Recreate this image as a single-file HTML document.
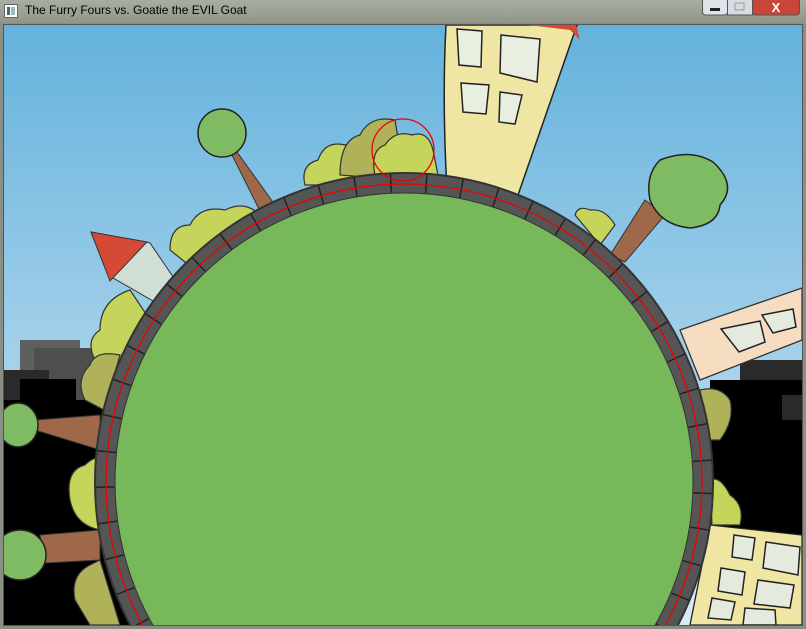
<!DOCTYPE html>
<html><head><style>
html,body{margin:0;padding:0;width:806px;height:629px;overflow:hidden;background:#8a8f86;font-family:"Liberation Sans",sans-serif}
svg{display:block}
.title{position:absolute;left:0;top:0;width:806px;height:23px;background:linear-gradient(#a9aea3,#8f9688);}
.title span{position:absolute;left:25px;top:3px;font-size:12px;color:#000}
</style></head><body>
<div class="title">
<svg style="position:absolute;left:4px;top:4px" width="14" height="14"><rect x="0.5" y="0.5" width="13" height="13" fill="#fff" stroke="#666"/><rect x="3" y="3" width="3" height="8" fill="#2a7a6a"/><rect x="7" y="3" width="4" height="8" fill="#9bb"/></svg>
<span>The Furry Fours vs. Goatie the EVIL Goat</span>
<svg style="position:absolute;left:702px;top:0" width="100" height="18">
<rect x="0.5" y="-2" width="25" height="17" rx="3" fill="#dfe4ea" stroke="#555"/><rect x="8" y="8" width="10" height="3" fill="#222"/>
<rect x="25.5" y="-2" width="25" height="17" fill="#d7dce2" stroke="#555"/><rect x="33" y="3" width="9" height="7" fill="none" stroke="#999"/>
<rect x="50.5" y="-2" width="47" height="17" rx="3" fill="#c8453a" stroke="#555"/><text x="74" y="12" font-size="13" font-weight="bold" fill="#fff" text-anchor="middle">X</text>
</svg>
</div>
<svg style="position:absolute;left:0;top:23px" width="806" height="606" viewBox="0 23 806 606">
<defs><linearGradient id="sky" x1="0" y1="0" x2="0" y2="1"><stop offset="0" stop-color="#64b2dc"/><stop offset="0.6" stop-color="#a9d3ec"/><stop offset="1" stop-color="#d9ecf6"/></linearGradient></defs>
<rect x="0" y="23" width="806" height="606" fill="#8a8f86"/>
<rect x="4" y="25" width="798" height="600" fill="url(#sky)"/>
<rect x="20" y="340" width="60" height="290" fill="#5f5f5f"/>
<rect x="34" y="348" width="110" height="280" fill="#4e4e4e"/>
<rect x="4" y="370" width="45" height="260" fill="#2a2a2a"/>
<rect x="20" y="379" width="56" height="250" fill="#000"/>
<rect x="4" y="400" width="140" height="225" fill="#000"/>
<rect x="740" y="360" width="62" height="265" fill="#2a2a2a"/>
<rect x="710" y="380" width="92" height="245" fill="#000"/>
<rect x="782" y="395" width="20" height="25" fill="#2a2a2a"/>
<path d="M446 25 L577 25 L518 195 L447 190 Q442 100 446 25Z" fill="#f0e6a4" stroke="#222" stroke-width="1.5"/>
<path d="M528 25 L576 25 L580 40 L570 30Z" fill="#d44a35"/>
<path d="M457 29 L482 31 L481 67 L459 65Z M501 35 L540 39 L537 82 L500 73Z M461 83 L489 85 L486 114 L463 112Z M500 92 L522 95 L515 124 L499 122Z" fill="#e8eee0" stroke="#222" stroke-width="1.5"/>
<path d="M680 330 L802 288 L802 340 L700 380Z" fill="#f6dcc0" stroke="#333" stroke-width="1.3"/>
<path d="M721 329 L760 321 L765 342 L739 352Z M762 315 L793 309 L796 327 L773 333Z" fill="#e4ebde" stroke="#222" stroke-width="1.5"/>
<path d="M710 525 L802 535 L802 625 L690 625Z" fill="#f0e6a4" stroke="#222" stroke-width="1.3"/>
<path d="M734 535 L755 538 L752 560 L732 557Z M766 542 L800 547 L798 575 L763 568Z M721 568 L745 572 L742 595 L718 591Z M758 580 L794 585 L790 608 L754 604Z M712 598 L735 602 L731 620 L708 618Z M745 608 L775 610 L776 625 L743 625Z" fill="#e4ebde" stroke="#222" stroke-width="1.5"/>
<path d="M91 232 L150 243 L182 290 L160 305 L108 275Z" fill="#cfdfd4" stroke="#333"/>
<path d="M91 232 L147 242 L110 281Z" fill="#d44a35" stroke="#333"/>
<path d="M237 152 L275 205 L262 215 L232 155Z" fill="#a0684a" stroke="#333"/>
<ellipse cx="222" cy="133" rx="24" ry="24" fill="#7fbb62" stroke="#222" stroke-width="1.5"/>
<path d="M645 200 L665 215 L625 262 L610 255Z" fill="#a0684a" stroke="#333"/>
<path d="M660 160 Q690 148 713 162 Q738 185 720 205 Q718 225 690 228 Q660 225 650 200 Q645 175 660 160Z" fill="#7fbb62" stroke="#222" stroke-width="1.5"/>
<path d="M35 420 L100 415 L100 450 L35 430Z" fill="#a0684a" stroke="#333"/>
<ellipse cx="18" cy="425" rx="20" ry="22" fill="#7fbb62" stroke="#222" stroke-width="1.5"/>
<path d="M40 535 L100 530 L100 560 L45 563Z" fill="#a0684a" stroke="#333"/>
<ellipse cx="20" cy="555" rx="26" ry="25" fill="#7fbb62" stroke="#222" stroke-width="1.5"/>
<g stroke="#333" stroke-width="1.2">
<path d="M305 185 Q300 165 318 160 Q325 140 345 145 Q365 140 375 160 L380 185Z" fill="#c5d45a"/>
<path d="M340 175 Q340 140 360 135 Q370 115 395 120 L405 180Z" fill="#b0b25a"/>
<path d="M375 175 Q370 150 385 145 Q395 130 412 135 Q428 130 433 150 L438 175Z" fill="#c5d45a"/>
<path d="M170 250 Q170 225 190 225 Q200 205 225 210 Q245 200 260 215 L195 270Z" fill="#c5d45a"/>
<path d="M575 215 Q578 205 590 210 Q605 208 615 225 L600 245Z" fill="#c5d45a"/>
<path d="M95 360 Q85 340 100 330 Q100 300 130 290 L150 320 L115 390Z" fill="#c5d45a"/>
<path d="M85 400 Q75 380 90 365 Q95 350 120 355 L104 410Z" fill="#b0b25a"/>
<path d="M70 500 Q65 470 85 465 Q95 455 100 460 L100 530 Q75 525 70 500Z" fill="#c5d45a"/>
<path d="M75 600 Q70 575 90 565 L100 560 L120 625 L90 625Z" fill="#b0b25a"/>
<path d="M700 390 Q720 385 730 400 Q735 420 720 440 L710 440Z" fill="#b0b25a"/>
<path d="M710 480 Q720 475 730 495 Q745 505 740 525 L712 525Z" fill="#c5d45a"/>
</g>
<circle cx="404" cy="482" r="309" fill="#555" stroke="#333" stroke-width="2"/>
<circle cx="404" cy="482" r="299" fill="none" stroke="#222" stroke-width="19" stroke-dasharray="1.5 34" transform="rotate(2 404 482)"/>
<circle cx="404" cy="482" r="298" fill="none" stroke="#e00" stroke-width="1.3"/>
<circle cx="404" cy="482" r="289" fill="#76b85a" stroke="#333" stroke-width="1"/>
<circle cx="403" cy="150" r="31" fill="none" stroke="#e00" stroke-width="1.3"/>
<rect x="0" y="625" width="806" height="4" fill="#8a8f86"/>
<rect x="0" y="23" width="4" height="606" fill="#8a8f86"/>
<rect x="802" y="23" width="4" height="606" fill="#8a8f86"/>
<rect x="3.5" y="24.5" width="799" height="601" fill="none" stroke="#555"/>
</svg>
</body></html>
